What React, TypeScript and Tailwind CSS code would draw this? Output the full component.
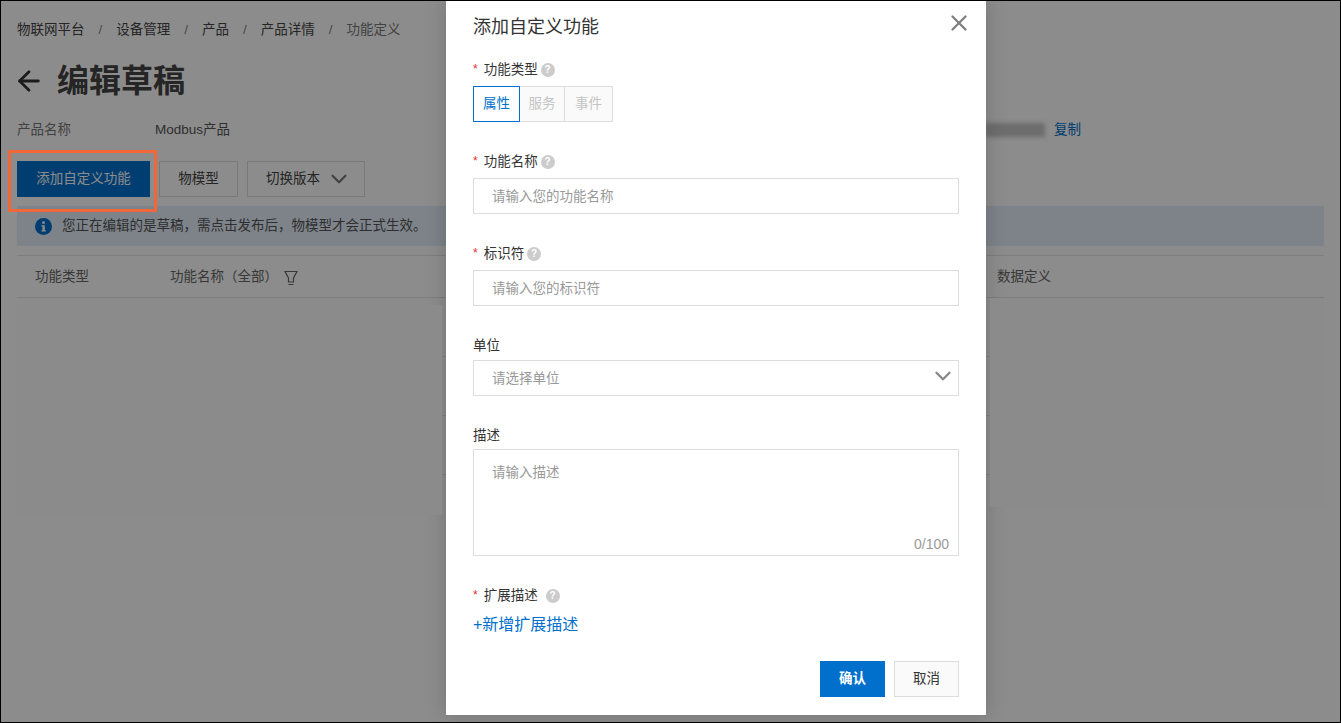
import { X, ChevronDown, ArrowLeft } from 'lucide-react';

const Help = () => (
  <span className="inline-flex h-[14px] w-[14px] items-center justify-center rounded-full bg-[#cccccc] text-[10px] font-bold leading-none text-white">?</span>
);

const Req = () => <span className="mr-[3px] -translate-y-px text-[12px] leading-none text-[#e62e2e]">*</span>;

const Crumb = ({ children }: { children: string }) => <span className="text-[#444444]">{children}</span>;

const Sep = () => <span className="mx-[14px] text-[#888888]">/</span>;

const App = () => {
  return (
    <div className="relative h-[723px] w-[1341px] overflow-hidden border border-black bg-white font-['Liberation_Sans','Noto_Sans_CJK_SC',sans-serif] text-[13.5px] text-[#333333]">
      <div className="px-4 pt-[21px]">
        <div className="flex h-4 items-center leading-4">
          <Crumb>物联网平台</Crumb>
          <Sep />
          <Crumb>设备管理</Crumb>
          <Sep />
          <Crumb>产品</Crumb>
          <Sep />
          <Crumb>产品详情</Crumb>
          <Sep />
          <span className="text-[#777777]">功能定义</span>
        </div>
        <div className="mt-[22px] flex h-[42px] items-center">
          <ArrowLeft size={32} strokeWidth={2.1} className="-ml-[4px] text-[#333333]" />
          <span className="ml-[12px] text-[32px] font-bold leading-[42px] text-[#444444]">编辑草稿</span>
        </div>
        <div className="mt-[18px] flex h-5 items-center leading-5">
          <span className="w-[138px] text-[#777777]">产品名称</span>
          <span className="text-[#555555]">Modbus产品</span>
          <div className="ml-auto mr-[243px] flex items-center">
            <span className="h-[14px] w-[60px] bg-[#c6c6c6] blur-[2px]" />
            <span className="ml-[9px] text-[#0070cc]">复制</span>
          </div>
        </div>
        <div className="mt-[21px] flex gap-[9px]">
          <button className="h-9 w-[133px] bg-[#0070cc] pt-px text-white">添加自定义功能</button>
          <button className="h-9 w-[79px] border border-[#dddddd] pt-px text-[#444444]">物模型</button>
          <button className="flex h-9 w-[118px] items-center gap-[6px] border border-[#dddddd] pl-[18px] text-[#444444]">
            切换版本
            <ChevronDown size={26} strokeWidth={2} className="text-[#777777]" />
          </button>
        </div>
        <div className="mt-[9px] flex h-10 items-center bg-[#e3effa] pl-[18px]">
          <svg width="17" height="17" viewBox="0 0 17 17">
            <circle cx="8.5" cy="8.5" r="8.5" fill="#0070cc" />
            <rect x="7.2" y="3.4" width="2.6" height="2.4" fill="white" />
            <path d="M6.4 7.2h3.4v5h1v1.4H6.4v-1.4h1v-3.6h-1z" fill="white" />
          </svg>
          <span className="ml-[10px] text-[#555555]">您正在编辑的是草稿，需点击发布后，物模型才会正式生效。</span>
        </div>
        <div className="mt-[9px] flex h-[43px] items-center border-y border-[#e5e5e5] pl-[18px] pt-[2px] text-[#666666]">
          <span className="w-[135px]">功能类型</span>
          <span>功能名称（全部）</span>
          <svg width="14" height="16" viewBox="0 0 14 16" fill="none" stroke="#666666" strokeWidth="1.2" className="ml-[6px]">
            <path d="M1 1.5h12L9.5 8v4h-5V8zM4.5 14.5h5" />
          </svg>
          <span className="ml-auto mr-[273px]">数据定义</span>
        </div>
        <div className="h-[59px] border-b border-[#e5e5e5]" />
        <div className="h-[59px] border-b border-[#e5e5e5]" />
        <div className="h-[59px] border-b border-[#e5e5e5]" />
      </div>

      <div className="absolute inset-0 bg-black/45" />

      <div className="absolute left-[445px] top-0 h-[714px] w-[540px] bg-white px-[27px] shadow-[0_0_20px_rgba(0,0,0,0.18)]">
        <div className="flex h-[50px] items-center justify-between pt-[2px]">
          <span className="text-[18px] leading-6 text-[#333333]">添加自定义功能</span>
          <X size={26} strokeWidth={2.2} className="-mr-[13px] -mt-[8px] text-[#808080]" />
        </div>

        <div className="mt-[11px] flex h-4 items-center gap-[3px] leading-4">
          <Req />
          <span>功能类型</span>
          <Help />
        </div>
        <div className="mt-[8px] flex h-9">
          <span className="z-10 flex w-[47px] items-center justify-center border border-[#0070cc] text-[#0070cc]">属性</span>
          <span className="-ml-px flex w-[46px] items-center justify-center border border-[#dddddd] bg-[#fafafa] text-[#c4c4c4]">服务</span>
          <span className="-ml-px flex w-[49px] items-center justify-center border border-[#dddddd] bg-[#fafafa] text-[#c4c4c4]">事件</span>
        </div>

        <div className="mt-[32px] flex h-4 items-center gap-[3px] leading-4">
          <Req />
          <span>功能名称</span>
          <Help />
        </div>
        <div className="mt-[8px] flex h-9 items-center border border-[#dddddd] pl-[18px] pt-[2px] text-[#999999]">请输入您的功能名称</div>

        <div className="mt-[32px] flex h-4 items-center gap-[3px] leading-4">
          <Req />
          <span>标识符</span>
          <Help />
        </div>
        <div className="mt-[8px] flex h-9 items-center border border-[#dddddd] pl-[18px] pt-[2px] text-[#999999]">请输入您的标识符</div>

        <div className="mt-[32px] h-4 leading-4">单位</div>
        <div className="mt-[6px] flex h-9 items-center justify-between border border-[#dddddd] pl-[18px] pr-[2px] text-[#999999]">
          <span className="pt-[3px]">请选择单位</span>
          <ChevronDown size={26} strokeWidth={2.2} className="mb-[5px] text-[#888888]" />
        </div>

        <div className="mt-[32px] h-4 leading-4">描述</div>
        <div className="relative mt-[5px] h-[107px] border border-[#dddddd] pl-[18px] pt-[15px] leading-4 text-[#999999]">
          请输入描述
          <span className="absolute bottom-[3px] right-[9px] text-[14px] text-[#999999]">0/100</span>
        </div>

        <div className="mt-[32px] flex h-4 items-center gap-[3px] leading-4">
          <Req />
          <span>扩展描述</span>
          <span className="ml-[5px] flex"><Help /></span>
        </div>
        <div className="mt-[11px] text-[16px] leading-5 text-[#0070cc]">+新增扩展描述</div>

        <div className="mt-[26px] flex justify-end gap-[9px]">
          <button className="h-9 w-[65px] bg-[#0070cc] font-bold text-white">确认</button>
          <button className="h-9 w-[65px] border border-[#dddddd] bg-[#fafafa] text-[#333333]">取消</button>
        </div>
      </div>

      <div className="absolute left-[7px] top-[149px] h-[62px] w-[149px] border-[3px] border-[#f2673a]" />
      {/* patches over the empty table rows, the rows only show next to the modal */}
      <div className="absolute left-[16px] top-[304px] h-[210px] w-[425px] bg-[#8b8b8b]" />
      <div className="absolute left-[989px] top-[297px] h-[209px] w-[335px] bg-[#8b8b8b]" />
    </div>
  );
};

export default App;
